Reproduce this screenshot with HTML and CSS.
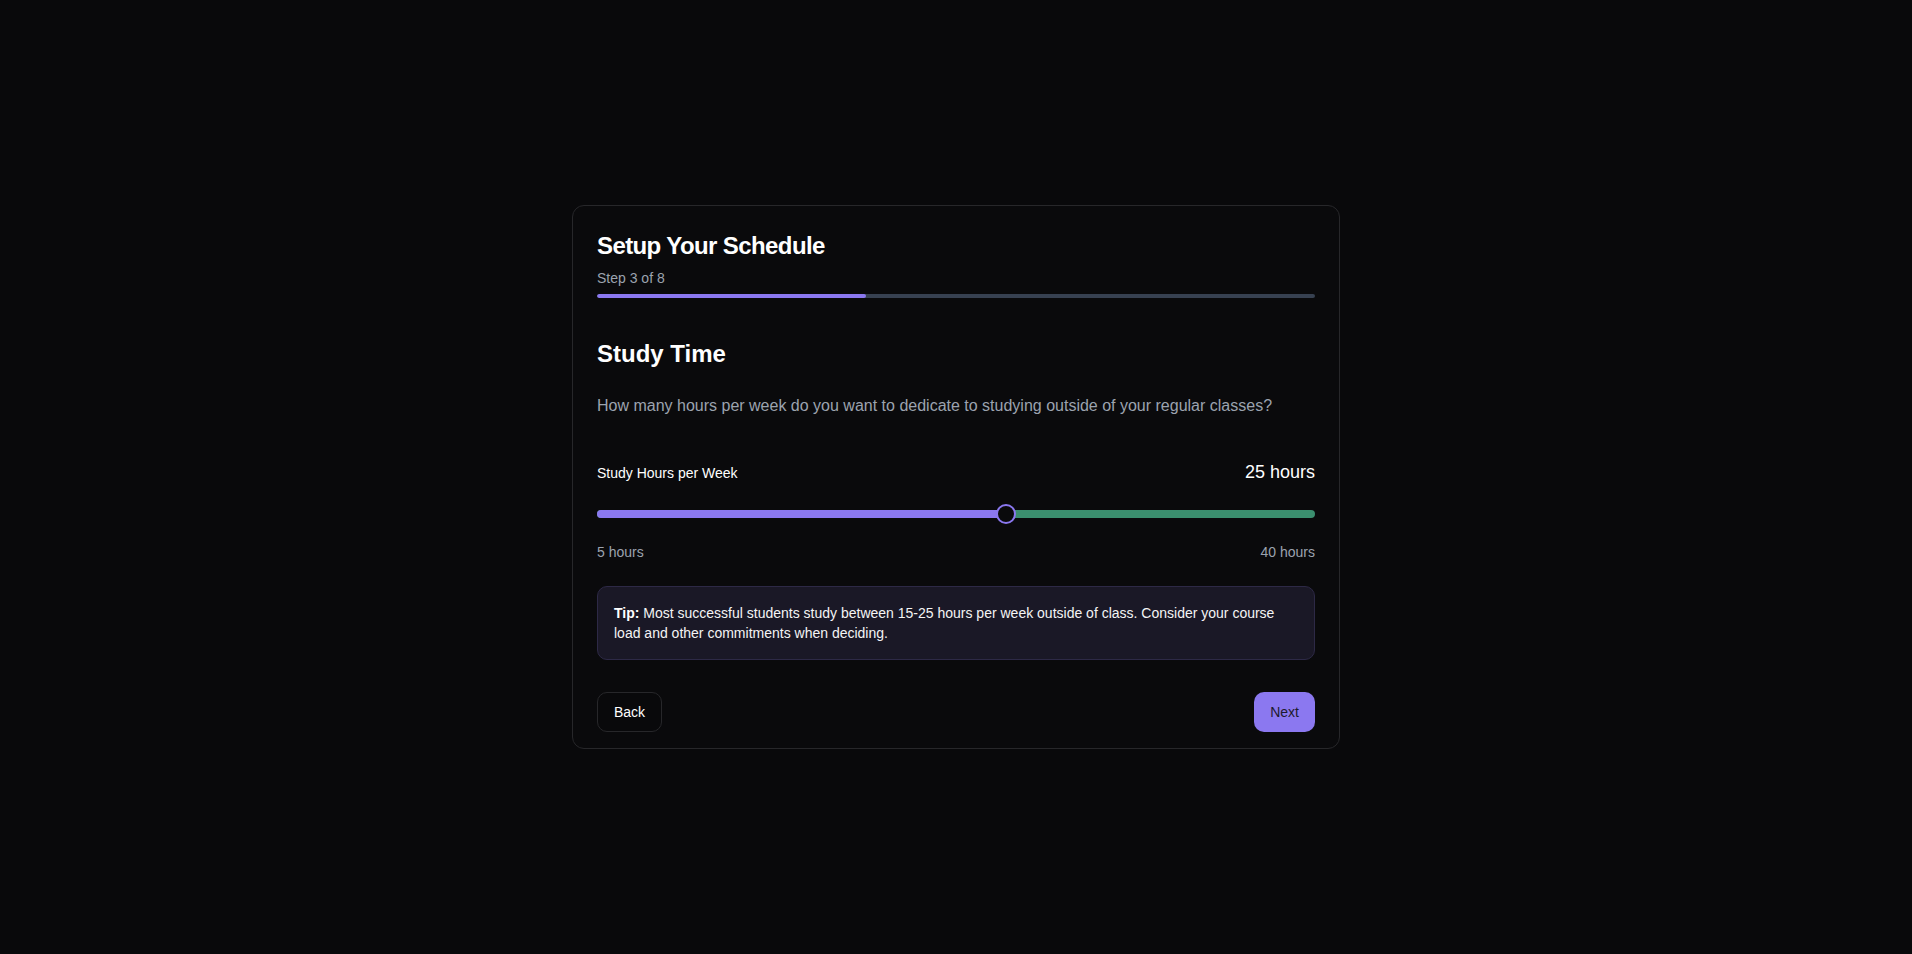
FILE: index.html
```html
<!DOCTYPE html>
<html lang="en">
<head>
<meta charset="utf-8">
<title>Setup Your Schedule</title>
<link rel="stylesheet" href="styles.css">
</head>
<body>
<main class="page">
  <section class="card">
    <header class="card-header">
      <h1 class="title">Setup Your Schedule</h1>
      <p class="step">Step 3 of 8</p>
      <div class="progress"><div class="progress-fill" style="width: 37.5%"></div></div>
    </header>
    <div class="card-body">
      <h2 class="heading">Study Time</h2>
      <p class="desc">How many hours per week do you want to dedicate to studying outside of your regular classes?</p>
      <div class="label-row">
        <span class="label">Study Hours per Week</span>
        <span class="value">25 hours</span>
      </div>
      <div class="slider">
        <div class="track">
          <div class="track-fill" style="width: calc((100% - 20px) * 0.5714 + 10px)"></div>
        </div>
        <div class="thumb" style="left: calc((100% - 20px) * 0.5714)"></div>
      </div>
      <div class="range-labels">
        <span>5 hours</span>
        <span>40 hours</span>
      </div>
      <p class="tip"><strong>Tip:</strong> Most successful students study between 15-25 hours per week outside of class. Consider your course load and other commitments when deciding.</p>
      <div class="actions">
        <button class="btn btn-outline" type="button">Back</button>
        <button class="btn btn-primary" type="button">Next</button>
      </div>
    </div>
  </section>
</main>
</body>
</html>
```

FILE: styles.css
```css
* { box-sizing: border-box; }
html, body { margin: 0; padding: 0; }
body {
  background: #09090b;
  color: #fafafa;
  font-family: "Liberation Sans", Arial, sans-serif;
}
.page {
  min-height: 100vh;
  display: flex;
  align-items: center;
  justify-content: center;
}
.card {
  width: 768px;
  background: #0a0a0c;
  border: 1px solid #27272a;
  border-radius: 12px;
  padding: 24px 24px 16px;
}
.card-header {
  display: flex;
  flex-direction: column;
}
.title {
  margin: 0;
  font-size: 24px;
  line-height: 32px;
  font-weight: 700;
  letter-spacing: -0.025em;
  color: #ffffff;
}
.step {
  margin: 6px 0 0;
  font-size: 14px;
  line-height: 20px;
  color: #9ca3af;
}
.progress {
  margin-top: 6px;
  height: 4px;
  border-radius: 2px;
  background: #374151;
  overflow: hidden;
}
.progress-fill {
  height: 100%;
  background: #8b78f0;
  border-radius: 2px;
}
.card-body {
  display: flex;
  flex-direction: column;
}
.heading {
  margin: 40px 0 0;
  font-size: 24px;
  line-height: 32px;
  font-weight: 700;
  color: #ffffff;
}
.desc {
  margin: 24px 0 0;
  font-size: 16px;
  line-height: 24px;
  color: #9ca3af;
}
.label-row {
  margin-top: 40px;
  display: flex;
  justify-content: space-between;
  align-items: baseline;
}
.label {
  font-size: 14px;
  line-height: 20px;
  font-weight: 500;
  color: #ffffff;
}
.value {
  font-size: 18px;
  line-height: 28px;
  font-weight: 500;
  color: #ffffff;
}
.slider {
  position: relative;
  margin-top: 18px;
  height: 20px;
  display: flex;
  align-items: center;
}
.track {
  width: 100%;
  height: 8px;
  border-radius: 4px;
  background: #3b8f6f;
  overflow: hidden;
}
.track-fill {
  height: 100%;
  background: #8b78f0;
}
.thumb {
  position: absolute;
  top: 0;
  width: 20px;
  height: 20px;
  border-radius: 50%;
  border: 2px solid #8b78f0;
  background: #0a0a0c;
}
.range-labels {
  margin-top: 18px;
  display: flex;
  justify-content: space-between;
  font-size: 14px;
  line-height: 20px;
  color: #9ca3af;
}
.tip {
  margin: 24px 0 0;
  padding: 16px;
  background: #1a1826;
  border: 1px solid #2d2946;
  border-radius: 10px;
  font-size: 14px;
  line-height: 20px;
  color: #f4f4f5;
}
.tip strong { font-weight: 700; color: #ffffff; }
.actions {
  margin-top: 32px;
  display: flex;
  justify-content: space-between;
}
.btn {
  height: 40px;
  padding: 0 16px;
  border-radius: 10px;
  font-family: inherit;
  font-size: 14px;
  line-height: 20px;
  font-weight: 500;
  cursor: pointer;
}
.btn-outline {
  background: #09090b;
  border: 1px solid #27272a;
  color: #ffffff;
}
.btn-primary {
  background: #8b78f0;
  border: none;
  color: #1e1b2e;
}
```
